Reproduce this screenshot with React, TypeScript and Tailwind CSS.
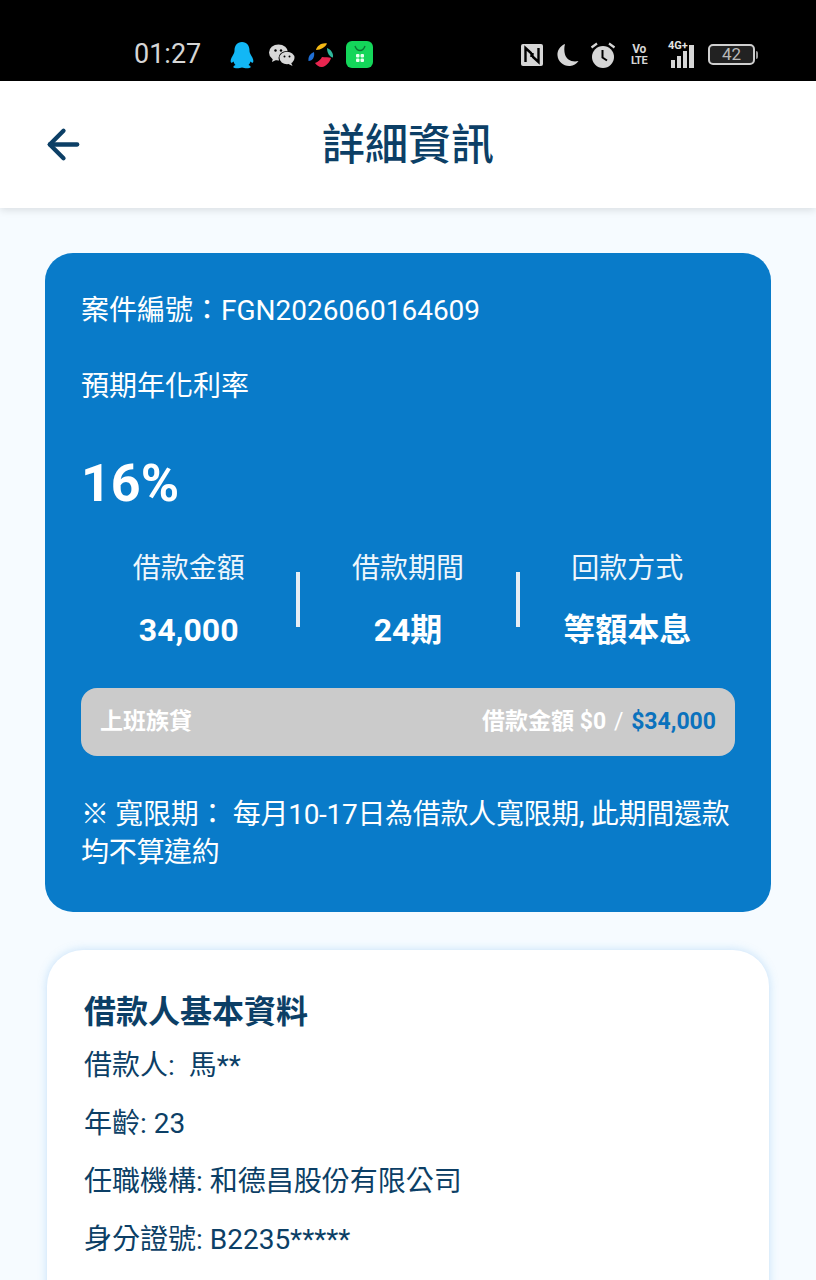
import { ArrowLeft } from 'lucide-react';

const font = { fontFamily: 'Roboto, "Noto Sans CJK TC", sans-serif' };

const stats = [
  { label: '借款金額', value: '34,000' },
  { label: '借款期間', value: '24期' },
  { label: '回款方式', value: '等額本息' },
];

const borrower = ['借款人:  馬**', '年齡: 23', '任職機構: 和德昌股份有限公司', '身分證號: B2235*****'];

function LeftIcons() {
  return (
    <div className="flex items-center">
      <svg width="26" height="28" viewBox="0 0 26 28" className="ml-[28px]">
        <path d="M13 1c-5 0-7.500 4-7.500 8.500 0 2-.5 3-2 5.500C2 17.500 1 20 2 21.500c1 .8 2-.5 2.500-1 .5 1.500 1 2.500 2 3.500-1.500.6-2.500 1.500-2 2.500.8 1 6 1 8.500 0 2.500 1 7.700 1 8.500 0 .5-1-.5-1.900-2-2.500 1-1 1.500-2 2-3.500.5.500 1.500 1.800 2.500 1 1-1.500 0-4-1.500-6.500-1.500-2.500-2-3.500-2-5.500C20.500 5 18 1 13 1z" fill="#12b7f5" />
      </svg>
      <svg width="28" height="24" viewBox="0 0 28 24" className="ml-[13px]">
        <ellipse cx="10.500" cy="9.500" rx="9.500" ry="8" fill="#d8d8d8" />
        <path d="M5 15l-1 4 5-2.500z" fill="#d8d8d8" />
        <circle cx="7.500" cy="7.500" r="1.200" fill="#000" />
        <circle cx="13" cy="7.500" r="1.200" fill="#000" />
        <ellipse cx="19" cy="15" rx="8.500" ry="7" fill="#000" />
        <ellipse cx="19" cy="15" rx="7.500" ry="6.200" fill="#d8d8d8" />
        <path d="M23 19.500l1.500 3.500-5-2.500z" fill="#d8d8d8" />
        <circle cx="16.500" cy="13.500" r="1" fill="#000" />
        <circle cx="21.500" cy="13.500" r="1" fill="#000" />
      </svg>
      <svg width="26" height="26" viewBox="0 0 26 26" className="ml-[12px]">
        <path d="M8 8C9 3.500 14 .5 19 1.500 17.500 5 13 8 8 8z" fill="#f5b914" />
        <path d="M19 6c4 1.500 6.500 5 6 9.500C21.500 15 19 11 19 6z" fill="#2fb79b" />
        <path d="M6 10c-4 1.500-6 5-5.500 9C4.500 19 7 15 6 10z" fill="#1f6fd6" />
        <path d="M7 21c3-1 6-4 7-6 3 .5 7 0 9 1-1 4-5 8.500-9 9-3 .2-5.500-2-7-4z" fill="#e8254f" />
      </svg>
      <div className="ml-[12px] relative w-[27px] h-[27px] rounded-[6px] bg-[#14d65a] flex items-center justify-center">
        <svg width="20" height="20" viewBox="0 0 20 20">
          <path d="M5 1c1 3 3 4.500 5 4.500S14 4 15 1" fill="none" stroke="#0b7a35" strokeWidth="1.400" />
          <rect x="6" y="9" width="3.500" height="3.500" rx="1" fill="#eafff0" />
          <rect x="10.500" y="9" width="3.500" height="3.500" rx="1" fill="#eafff0" />
          <rect x="6" y="13.500" width="3.500" height="3.500" rx="1" fill="#eafff0" />
          <rect x="10.500" y="13.500" width="3.500" height="3.500" rx="1" fill="#eafff0" />
        </svg>
      </div>
    </div>
  );
}

function RightIcons() {
  return (
    <div className="flex items-center text-[#d6d6d6]">
      <svg width="24" height="24" viewBox="0 0 24 24">
        <rect x="1" y="1" width="22" height="22" rx="2" fill="#d6d6d6" />
        <path d="M5.500 19V5l6 5.500M18.500 5v14l-6-5.500M11.500 10.500V14M12.500 10v3.500" fill="none" stroke="#000" strokeWidth="2.400" />
      </svg>
      <svg width="24" height="24" viewBox="0 0 24 24" className="ml-[12px]">
        <path d="M9 1C4 3 1 7.500 1.500 12.500 2 19 8 23.500 14 23c3.500-.3 6.500-2 8.500-5-7 1.500-12-1.500-13.500-6.500C8.200 8 8 4.500 9 1z" fill="#d6d6d6" />
      </svg>
      <svg width="26" height="28" viewBox="0 0 26 28" className="ml-[10px]">
        <circle cx="13" cy="16" r="11" fill="#d6d6d6" />
        <path d="M12.500 9v7.500l4.500 3" fill="none" stroke="#000" strokeWidth="2" />
        <path d="M1.500 6.500L7 2.500M24.500 6.500L19 2.500" stroke="#d6d6d6" strokeWidth="2.200" />
      </svg>
      <div className="ml-[14px] w-[18px] text-center font-bold text-[12px] leading-[11px] tracking-[-0.5px]">
        <div>Vo</div>
        <div className="text-[11px]">LTE</div>
      </div>
      <div className="ml-[13px] relative w-[36px] h-[26px]">
        <span className="absolute left-[7px] -top-[2px] font-bold text-[11px] leading-[12px] text-[#e4e4e4]">4G+</span>
        <div className="absolute left-[10px] bottom-0 flex items-end gap-[2px]">
          <i className="block w-[4px] h-[8px] bg-[#d6d6d6]" />
          <i className="block w-[4px] h-[12px] bg-[#d6d6d6]" />
          <i className="block w-[4px] h-[17px] bg-[#d6d6d6]" />
          <i className="block w-[5px] h-[23px] bg-[#d6d6d6]" />
        </div>
      </div>
      <div className="ml-[11px] flex items-center">
        <div className="w-[47px] h-[21px] rounded-[5px] border-2 border-[#cfcfcf] flex items-center justify-center text-[17px] leading-none text-[#b8b8b8] bg-[#222]">42</div>
        <i className="block w-[2px] h-[8px] ml-[1px] bg-[#9a9a9a] rounded-r" />
      </div>
    </div>
  );
}

export default function App() {
  return (
    <div className="w-[816px] h-[1280px] overflow-hidden bg-[#f6fbff]" style={font}>
      <div className="h-[81px] bg-black flex items-center justify-between pl-[134px] pr-[58px] pt-[28px]">
        <div className="flex items-center">
          <span className="text-[27px] leading-none text-[#d6d6d6]">01:27</span>
          <LeftIcons />
        </div>
        <RightIcons />
      </div>

      <header className="relative h-[127px] bg-white shadow-[0_2px_8px_rgba(0,0,0,0.12)] flex items-center justify-center">
        <ArrowLeft className="absolute left-[40px] top-[40px] text-[#0c3f66]" size={47} strokeWidth={2.200} />
        <h1 className="text-[43px] font-medium leading-none text-[#0c3f66] pt-[1px]">詳細資訊</h1>
      </header>

      <div className="px-[45px] pt-[45px]">
        <section className="h-[659px] rounded-[28px] bg-[#097bc9] px-[36px] pt-[41px] text-white">
          <p className="text-[28px] leading-[34px]">案件編號：FGN2026060164609</p>
          <p className="mt-[42px] text-[28px] leading-[34px]">預期年化利率</p>
          <p className="mt-[50px] text-[52px] font-bold leading-[60px]">16%</p>

          <div className="mt-[38px] grid grid-cols-[1fr_4px_1fr_4px_1fr] items-center">
            {stats.map((s, i) => (
              <div key={s.label} className="contents">
                {i > 0 && <div className="h-[55px] w-[4px] bg-[#e6eef5]" />}
                <div className="text-center">
                  <div className="text-[28px] leading-[34px] text-[#eef6fc]">{s.label}</div>
                  <div className="mt-[27px] text-[32px] font-bold leading-[34px]">{s.value}</div>
                </div>
              </div>
            ))}
          </div>

          <div className="mt-[41px] h-[68px] rounded-[16px] bg-[#cbcbcb] px-[19px] flex items-center justify-between text-[23px] font-bold">
            <span>上班族貸</span>
            <span>
              借款金額 $0 <span className="font-normal mx-[2px]">/</span> <span className="text-[#0b72bd]">$34,000</span>
            </span>
          </div>

          <p className="mt-[40px] text-[28px] leading-[38px] tracking-[-0.3px]">※ 寬限期： 每月10-17日為借款人寬限期, 此期間還款均不算違約</p>
        </section>

        <section className="mx-[2px] mt-[38px] h-[400px] rounded-[36px] bg-white px-[37px] pt-[39px] shadow-[0_0_10px_rgba(100,175,235,0.35)] text-[#0c3f66]">
          <h2 className="text-[32px] font-bold leading-[46px]">借款人基本資料</h2>
          <ul className="mt-[14px] flex flex-col gap-[24px]">
            {borrower.map((line) => (
              <li key={line} className="text-[28px] leading-[34px] whitespace-pre">{line}</li>
            ))}
          </ul>
        </section>
      </div>
    </div>
  );
}
